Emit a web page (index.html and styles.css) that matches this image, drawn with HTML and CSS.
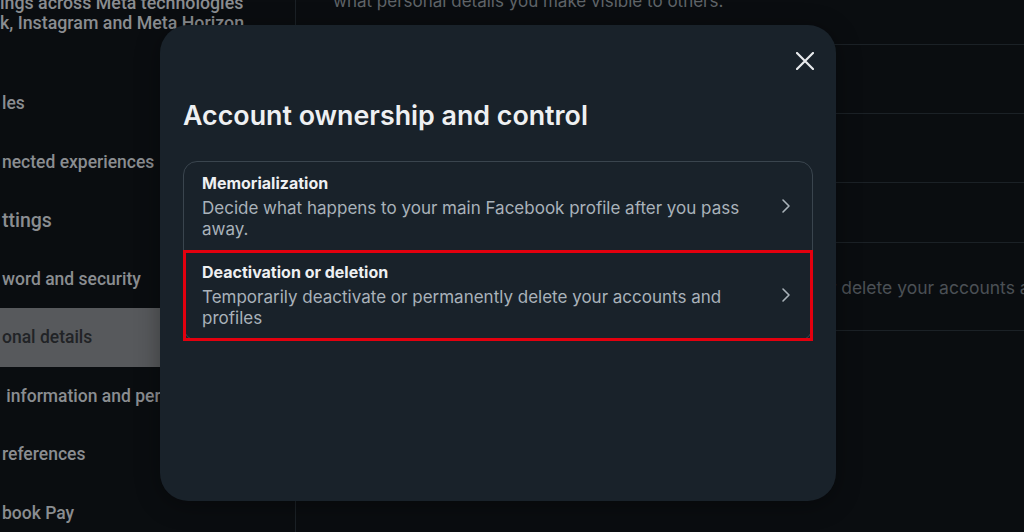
FILE: index.html
```html
<!DOCTYPE html>
<html lang="en">
<head>
  <meta charset="UTF-8" />
  <meta name="viewport" content="width=device-width, initial-scale=1.0"/>
  <title>Accounts Center - Personal details</title>
  <link rel="stylesheet" href="styles.css">
</head>
<body>
  <div class="page">
    <aside class="sidebar">
      <p class="side-intro">ings across Meta technologies<br>k, Instagram and Meta Horizon</p>
      <div class="side-item">les</div>
      <div class="side-item">nected experiences</div>
      <div class="side-item side-head">ttings</div>
      <div class="side-item">word and security</div>
      <div class="side-item active">onal details</div>
      <div class="side-item">&nbsp;information and permissions</div>
      <div class="side-item">references</div>
      <div class="side-item">book Pay</div>
    </aside>

    <main class="content">
      <p class="content-intro">what personal details you make visible to others.</p>
      <div class="row">
        <div class="row-title">Contact info</div>
        <div class="row-desc">Email, phone</div>
      </div>
      <div class="row">
        <div class="row-title">Birthday</div>
        <div class="row-desc">Date of birth</div>
      </div>
      <div class="row single">
        <div class="row-title">Identity confirmation</div>
      </div>
      <div class="row tall">
        <div class="row-title">Account ownership and control</div>
        <div class="row-desc">Manage your data, modify your legacy contact, deactivate or delete your accounts and profiles.</div>
      </div>
    </main>
  </div>

  <div class="modal">
    <div class="modal-top">
      <button class="close-btn" aria-label="Close">
        <svg width="18" height="18" viewBox="0 0 18 18">
          <path d="M1 1 L17 17 M17 1 L1 17" stroke="#e8eaec" stroke-width="2.2" stroke-linecap="round" fill="none"/>
        </svg>
      </button>
    </div>
    <h2 class="modal-title">Account ownership and control</h2>

    <div class="option-list">
      <div class="option">
        <div class="option-text">
          <div class="option-title">Memorialization</div>
          <div class="option-desc">Decide what happens to your main Facebook profile after you pass away.</div>
        </div>
        <svg class="chevron" width="10" height="16" viewBox="0 0 10 16">
          <path d="M2 2 L8 8 L2 14" stroke="#aab3ba" stroke-width="1.6" stroke-linecap="round" stroke-linejoin="round" fill="none"/>
        </svg>
      </div>
      <div class="option highlighted">
        <div class="option-text">
          <div class="option-title">Deactivation or deletion</div>
          <div class="option-desc">Temporarily deactivate or permanently delete your accounts and profiles</div>
        </div>
        <svg class="chevron" width="10" height="16" viewBox="0 0 10 16">
          <path d="M2 2 L8 8 L2 14" stroke="#aab3ba" stroke-width="1.6" stroke-linecap="round" stroke-linejoin="round" fill="none"/>
        </svg>
      </div>
    </div>
  </div>
</body>
</html>
```

FILE: styles.css
```css
:root {
  --page-bg: #0a0d10;
  --line: #1b2126;
  --side-text: #8a8d91;
  --modal-bg: #19222a;
  --modal-border: #3a454e;
  --text-main: #eef0f2;
  --text-sub: #a9b2ba;
  --mark: #e3000e;
}

html, body {
  margin: 0;
  height: 100%;
  overflow: hidden;
}

body {
  font-family: Inter, 'Liberation Sans', sans-serif;
  background-color: var(--page-bg);
  position: relative;
}

.page {
  display: flex;
  height: 100%;
}

/* left navigation (dimmed behind modal) */
.sidebar {
  width: 295px;
  flex-shrink: 0;
  border-right: 1px solid var(--line);
  color: var(--side-text);
  font-family: Roboto, 'Liberation Sans', sans-serif;
  font-size: 17.5px;
  white-space: nowrap;
  overflow: hidden;
}

.side-intro {
  margin: -7px 0 42px;
  line-height: 19.5px;
  font-size: 17.8px;
  font-weight: 500;
}

.side-item {
  height: 58.5px;
  display: flex;
  align-items: center;
  padding-left: 2px;
  font-weight: 500;
}

.side-head {
  font-size: 19.5px;
}

.side-item.active {
  background-color: #57595c;
  color: #212326;
}

/* main column */
.content {
  flex: 1;
  padding-left: 37px;
  color: #4b5055;
  white-space: nowrap;
  overflow: hidden;
}

.content-intro {
  margin: -9px 0 0;
  line-height: 20px;
  padding-bottom: 33px;
  border-bottom: 1px solid var(--line);
  font-size: 17px;
  color: #5f6468;
}

.row {
  padding: 13px 0;
  border-bottom: 1px solid var(--line);
  margin-left: -37px;
  padding-left: 37px;
}

.row.single {
  padding: 19px 0 18px 37px;
}

.row.tall {
  padding: 13px 0 32px 37px;
}

.row-title {
  line-height: 22px;
  font-size: 17px;
  font-weight: 500;
}

.row-desc {
  line-height: 20px;
  font-size: 17.5px;
}

/* modal */
.modal {
  position: absolute;
  left: 160px;
  top: 25px;
  width: 676px;
  height: 476px;
  box-sizing: border-box;
  padding: 27px 23px;
  background-color: var(--modal-bg);
  border-radius: 28px;
  box-shadow: 0 4px 24px rgba(0, 0, 0, 0.35);
}

.modal-top {
  display: flex;
  justify-content: flex-end;
}

.close-btn {
  background: none;
  border: none;
  padding: 0;
  width: 18px;
  height: 18px;
  margin-right: -1px;
  cursor: pointer;
  display: flex;
}

.modal-title {
  margin: 29px 0 30px;
  font-size: 26.8px;
  line-height: 32px;
  font-weight: 600;
  color: var(--text-main);
}

.option-list {
  border: 1px solid var(--modal-border);
  border-radius: 14px;
}

.option {
  display: flex;
  align-items: center;
  padding: 10px 21px 12px 18px;
}

.option.highlighted {
  outline: 3px solid var(--mark);
  outline-offset: -2px;
}

.option-text {
  flex: 1;
  max-width: 562px;
}

.option-title {
  font-size: 16px;
  line-height: 22px;
  font-weight: 700;
  color: var(--text-main);
  margin-bottom: 4px;
}

.option-desc {
  font-size: 17px;
  line-height: 20.5px;
  color: var(--text-sub);
}

.chevron {
  margin-left: auto;
  flex-shrink: 0;
}
```
